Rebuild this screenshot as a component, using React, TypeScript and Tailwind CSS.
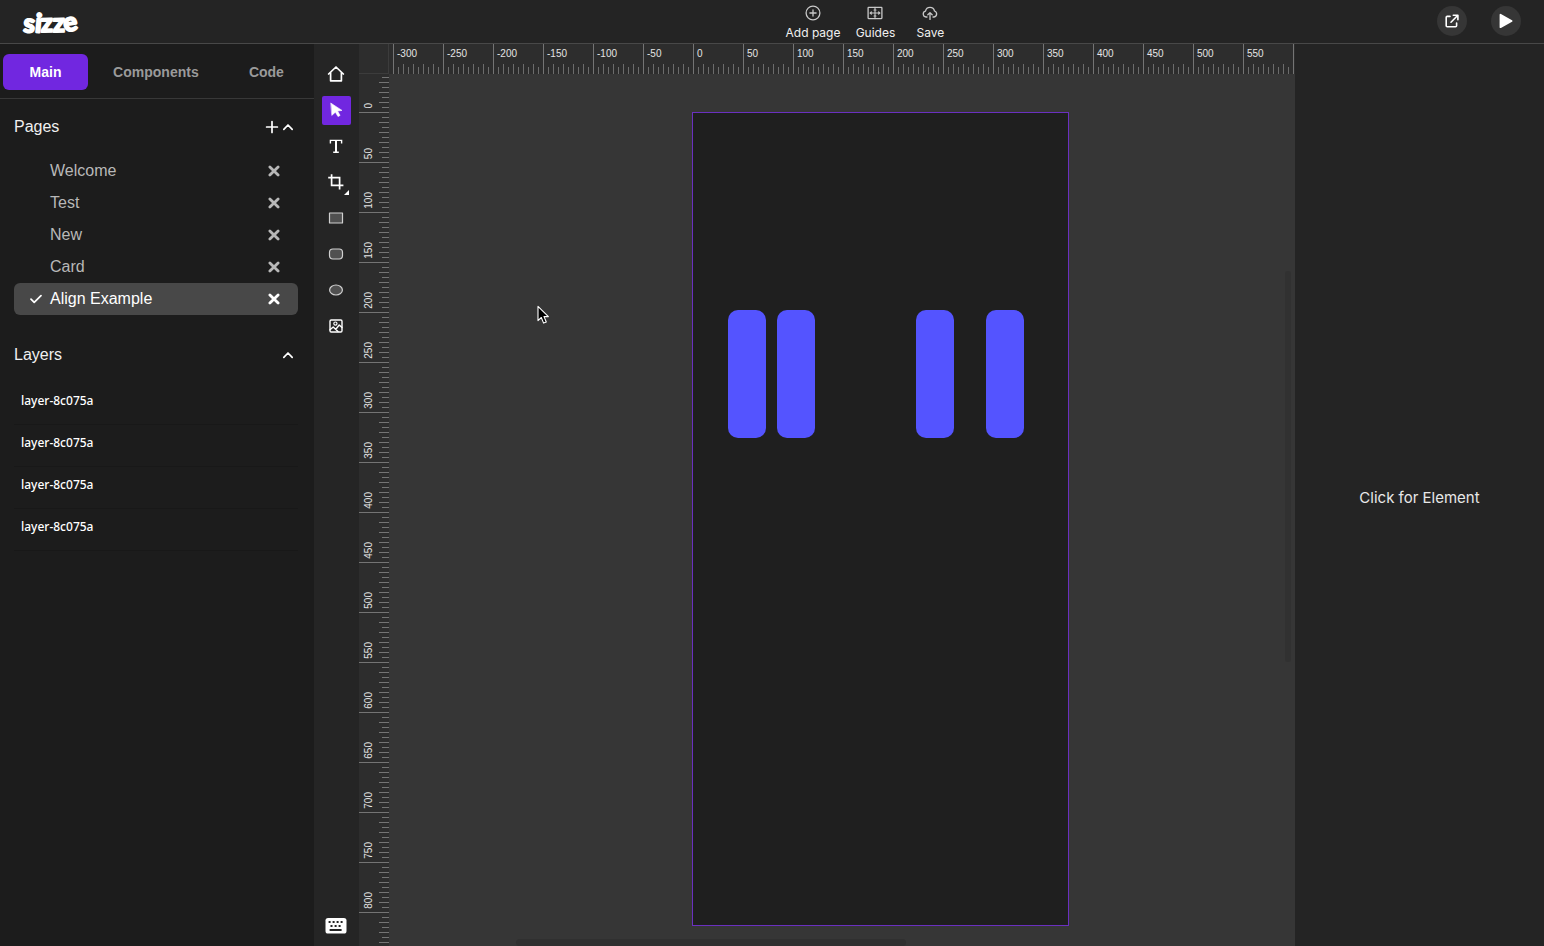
import { useState } from "react";
import type { ReactNode } from "react";

const PAGES = ["Welcome", "Test", "New", "Card", "Align Example"];
const LAYERS = ["layer-8c075a", "layer-8c075a", "layer-8c075a", "layer-8c075a"];
const TABS = ["Main", "Components", "Code"];
const TICKS = [1, 2, 3, 4, 5, 6, 7, 8, 9];

function range(from: number, to: number, step: number) {
  const out: number[] = [];
  for (let v = from; v <= to; v += step) out.push(v);
  return out;
}

function Logo() {
  return (
    <svg width="64" height="42" viewBox="0 0 64 42" role="img" aria-label="sizze" className="block">
      <text
        x="3"
        y="31"
        rotate="4 5 -1 -1 -10"
        fontFamily="Lato, sans-serif"
        fontWeight="700"
        fontSize="26"
        fill="#fff"
        stroke="#fff"
        strokeWidth="2"
        strokeLinejoin="round"
      >
        sizze
      </text>
    </svg>
  );
}

function HeaderAction({ label, children }: { label: string; children: ReactNode }) {
  return (
    <button type="button" className="flex min-w-10 flex-col items-center gap-1 text-xs leading-4 text-[#f0f0f0]">
      <svg width="16" height="16" viewBox="0 0 16 16" fill="none" stroke="#c8c8c8" strokeWidth="1.3" strokeLinecap="round" strokeLinejoin="round" aria-hidden="true">
        {children}
      </svg>
      {label}
    </button>
  );
}

function Header() {
  return (
    <header className="grid h-11 shrink-0 grid-cols-[1fr_auto_1fr] items-center border-b border-[#484848] bg-[#242424]">
      <a href="#home" className="justify-self-start pl-5">
        <Logo />
      </a>
      <nav className="flex gap-[15px] pl-[192px] pt-[3px] font-[Inter,sans-serif]">
        <HeaderAction label="Add page">
          <circle cx="8" cy="8" r="6.9" />
          <path d="M8 4.9v6.2M4.9 8h6.2" />
        </HeaderAction>
        <HeaderAction label="Guides">
          <rect x="1.1" y="2.4" width="13.8" height="11.2" rx="0.5" />
          <path d="M8 2.4v11.2M3 8h10M7 5h2M7 11h2M4.4 6.8 3.2 8l1.2 1.2M11.6 6.8 12.8 8l-1.2 1.2" strokeWidth="1.1" />
        </HeaderAction>
        <HeaderAction label="Save">
          <path d="M5 12H4a3 3 0 0 1-.5-5.9 4.6 4.6 0 0 1 9-.1A3.1 3.1 0 0 1 12.1 12H11M8 14.4V7.8M5.8 9.8 8 7.6l2.2 2.2" />
        </HeaderAction>
      </nav>
      <div className="flex gap-6 justify-self-end pr-[23px]">
        <button type="button" aria-label="Open in new tab" className="mb-0.5 flex size-[30px] items-center justify-center rounded-full bg-[#363636]">
          <svg width="14" height="14" viewBox="0 0 14 14" fill="none" stroke="#fff" strokeWidth="1.6" strokeLinecap="round" strokeLinejoin="round" aria-hidden="true">
            <path d="M5 2.4H2.2a1 1 0 0 0-1 1v8.4a1 1 0 0 0 1 1h8.4a1 1 0 0 0 1-1V9M6 8.2l6.6-6.7M8.3 1.2h4.6v4.5" />
          </svg>
        </button>
        <button type="button" aria-label="Play" className="mb-0.5 flex size-[30px] items-center justify-center rounded-full bg-[#363636]">
          <svg width="14" height="16" viewBox="0 0 14 16" aria-hidden="true">
            <path d="M1.5 1.8v12.4L12.6 8Z" fill="#fff" stroke="#fff" strokeWidth="1.8" strokeLinejoin="round" />
          </svg>
        </button>
      </div>
    </header>
  );
}

function ChevronUp() {
  return (
    <svg width="12" height="12" viewBox="0 0 12 12" fill="none" stroke="#fff" strokeWidth="1.7" strokeLinecap="round" strokeLinejoin="round" aria-hidden="true">
      <path d="M1.8 8.3 6 4l4.2 4.3" />
    </svg>
  );
}

function Sidebar({ page, onPage }: { page: string; onPage: (p: string) => void }) {
  return (
    <aside className="flex w-[314px] shrink-0 flex-col bg-[#1c1c1c] text-[#f0f0f0]">
      <div role="tablist" className="flex h-[55px] items-center border-b border-[#383838] pl-[3px] pr-[5px] pt-0.5">
        {TABS.map((t, i) => (
          <button
            key={t}
            type="button"
            role="tab"
            aria-selected={i === 0}
            className={
              i === 0
                ? "h-9 w-[85px] rounded-md bg-[#7127e0] text-sm font-bold text-white"
                : "h-9 grow rounded-md text-sm font-bold text-[#9a9a9a]"
            }
          >
            {t}
          </button>
        ))}
      </div>

      <section className="px-[14px] pr-4 pt-4">
        <div className="flex h-6 items-center justify-between">
          <h2 className="text-base">Pages</h2>
          <div className="flex items-center gap-[3px] pr-1">
            <button type="button" aria-label="Add page">
              <svg width="14" height="14" viewBox="0 0 14 14" stroke="#fff" strokeWidth="1.7" strokeLinecap="round" aria-hidden="true">
                <path d="M7 1.6v10.8M1.6 7h10.8" />
              </svg>
            </button>
            <button type="button" aria-label="Collapse pages">
              <ChevronUp />
            </button>
          </div>
        </div>
        <ul className="mt-4">
          {PAGES.map((p) => {
            const on = p === page;
            return (
              <li
                key={p}
                className={
                  on
                    ? "flex h-8 items-center rounded-md bg-[#484848] pr-[18px] text-white"
                    : "flex h-8 items-center rounded-md pr-[18px] text-[#b8b8b8]"
                }
              >
                <button type="button" onClick={() => onPage(p)} className="flex grow items-center gap-2 pl-4 text-left text-base">
                  <svg width="12" height="12" viewBox="0 0 12 12" fill="none" stroke={on ? "#fff" : "none"} strokeWidth="1.7" strokeLinecap="round" strokeLinejoin="round" aria-hidden="true">
                    <path d="M1 6.2 4.2 9.4 11 2.6" />
                  </svg>
                  {p}
                </button>
                <button type="button" aria-label={`Delete ${p}`}>
                  <svg width="12" height="12" viewBox="0 0 12 12" stroke="currentColor" strokeWidth="2.8" strokeLinecap="round" aria-hidden="true">
                    <path d="m1.9 1.9 8.2 8.2M10.1 1.9l-8.2 8.2" />
                  </svg>
                </button>
              </li>
            );
          })}
        </ul>
      </section>

      <section className="px-[14px] pr-4 pt-7">
        <div className="flex h-6 items-center justify-between">
          <h2 className="text-base">Layers</h2>
          <button type="button" aria-label="Collapse layers" className="pr-1">
            <ChevronUp />
          </button>
        </div>
        <ul className="mt-4">
          {LAYERS.map((l, i) => (
            <li key={i} className="border-b border-[#181818]">
              <button type="button" className="h-[41px] w-full px-[7px] pb-1.5 text-left font-['Noto_Sans',sans-serif] text-xs font-medium text-white">
                {l}
              </button>
            </li>
          ))}
        </ul>
      </section>
    </aside>
  );
}

const TOOLS: { name: string; icon: ReactNode }[] = [
  { name: "Home", icon: <path d="M1.6 9 9 2l7.4 7M3.6 7.6v8.2h10.8V7.6" strokeWidth="1.7" /> },
  {
    name: "Select",
    icon: <path d="M4 2.2 15 9.4l-4.4.7 2.5 4.3-2.1 1.2-2.6-4.4L5 14.2Z" fill="#fff" stroke="#fff" strokeWidth="0.6" />,
  },
  {
    name: "Text",
    icon: (
      <>
        <path d="M3.4 6.4V3.4h11.2v3M6.2 15.2h5.6" strokeWidth="1.4" strokeLinecap="butt" strokeLinejoin="miter" />
        <path d="M9 3.4v11.8" strokeWidth="2" strokeLinecap="butt" />
      </>
    ),
  },
  { name: "Crop", icon: <path d="M4.6 1.2v11.2h11.8M1.2 4.6h11.4v11.8" strokeWidth="1.7" strokeLinecap="butt" strokeLinejoin="miter" /> },
  { name: "Rectangle", icon: <rect x="2.5" y="4" width="13" height="10" fill="#505050" stroke="#d0d0d0" strokeWidth="1.2" /> },
  { name: "Rounded rectangle", icon: <rect x="2.5" y="4" width="13" height="10" rx="3.4" fill="#505050" stroke="#d0d0d0" strokeWidth="1.2" /> },
  { name: "Ellipse", icon: <ellipse cx="9" cy="9" rx="6.4" ry="5" fill="#505050" stroke="#d0d0d0" strokeWidth="1.2" /> },
  {
    name: "Image",
    icon: (
      <>
        <rect x="3" y="3" width="12" height="12" rx="1.2" strokeWidth="1.4" />
        <circle cx="8.4" cy="6.6" r="1.6" strokeWidth="1.2" />
        <path d="M3 12.8 6.2 10l4.8 4.6M8.8 12.2 12.2 8l2.8 2.6" strokeWidth="1.4" />
      </>
    ),
  },
];

function Toolbar() {
  const [tool, setTool] = useState("Select");
  return (
    <div role="toolbar" aria-label="Tools" className="flex w-[45px] shrink-0 flex-col items-center bg-[#252525] pb-[11px] pt-4">
      <div className="flex flex-col gap-[7px]">
        {TOOLS.map(({ name, icon }) => (
          <button
            key={name}
            type="button"
            aria-label={name}
            onClick={() => setTool(name)}
            className={
              tool === name
                ? "relative flex size-[29px] items-center justify-center rounded-xs bg-[#7127e0] pb-px pr-px"
                : "relative flex size-[29px] items-center justify-center pb-px pr-px"
            }
          >
            <svg width="18" height="18" viewBox="0 0 18 18" fill="none" stroke="#fff" strokeLinecap="round" strokeLinejoin="round" aria-hidden="true">
              {icon}
            </svg>
            {name === "Crop" && (
              <svg width="5" height="5" viewBox="0 0 5 5" className="absolute bottom-0.5 right-0.5" aria-hidden="true">
                <path d="M5 0v5H0Z" fill="#fff" />
              </svg>
            )}
          </button>
        ))}
      </div>
      <button type="button" aria-label="Keyboard shortcuts" className="mt-auto pr-0.5">
        <svg width="22" height="18" viewBox="0 0 22 18" aria-hidden="true">
          <rect x="0.5" y="1" width="21" height="15.5" rx="2.6" fill="#fff" />
          <path d="M3.6 5.1h2M7.6 5.1h2M11.6 5.1h2M15.6 5.1h2M5.5 9.1h2M9.6 9.1h2M13.6 9.1h2M4.6 13.1h12" stroke="#252525" strokeWidth="2" />
        </svg>
      </button>
    </div>
  );
}

function TopRuler() {
  return (
    <div className="flex h-[30px] min-w-0 grow overflow-hidden bg-[#2d2d2d] pl-[4px]">
      {range(-300, 550, 50).map((v) => (
        <div key={v} className="flex h-full w-[50px] shrink-0 flex-col justify-between border-l border-[#747474]">
          <span className="pl-[3px] pt-[3px] text-[10px] leading-[14px] text-[#e4e4e4]">{v}</span>
          <div className="flex items-end gap-1 pl-1">
            {TICKS.map((t) => (
              <i key={t} className={t % 2 ? "h-[7px] w-px bg-[#6c6c6c]" : "h-[10px] w-px bg-[#6c6c6c]"} />
            ))}
          </div>
        </div>
      ))}
      <div className="h-full border-l border-[#747474]" />
    </div>
  );
}

function LeftRuler() {
  return (
    <div className="flex w-[30px] shrink-0 flex-col overflow-hidden bg-[#2d2d2d]">
      {range(0, 850, 50).map((v) => (
        <div
          key={v}
          className={
            v === 0
              ? "flex h-[39px] shrink-0 items-end justify-between overflow-hidden border-b border-[#747474]"
              : "flex h-[50px] shrink-0 items-end justify-between overflow-hidden border-b border-[#747474]"
          }
        >
          <span className="rotate-180 pr-[3px] pt-[3px] text-[10px] leading-[14px] text-[#e4e4e4] [writing-mode:vertical-rl]">
            {v <= 800 && v}
          </span>
          <div className="flex flex-col items-end gap-1 pb-1">
            {TICKS.map((t) => (
              <i key={t} className={t % 2 ? "h-px w-[7px] bg-[#747474]" : "h-px w-[10px] bg-[#747474]"} />
            ))}
          </div>
        </div>
      ))}
    </div>
  );
}

function Canvas() {
  return (
    <div className="relative min-w-0 grow overflow-hidden bg-[#363636]">
      <div className="absolute left-[303px] top-[38px] h-[814px] w-[377px] border border-[#6a30c0] bg-[#1f1f1f]">
        <div className="absolute left-[35px] top-[197px] h-[128px] w-[38px] rounded-[10px] bg-[#5454ff]" />
        <div className="absolute left-[84px] top-[197px] h-[128px] w-[38px] rounded-[10px] bg-[#5454ff]" />
        <div className="absolute left-[223px] top-[197px] h-[128px] w-[38px] rounded-[10px] bg-[#5454ff]" />
        <div className="absolute left-[293px] top-[197px] h-[128px] w-[38px] rounded-[10px] bg-[#5454ff]" />
      </div>
      <svg width="13" height="20" viewBox="0 0 13 20" className="absolute left-[148px] top-[231px]" aria-hidden="true">
        <path d="M1 1.4v14.2l3.3-3.1 2.3 5.6 2.7-1.1-2.3-5.4h4.4Z" fill="#000" stroke="#fff" strokeWidth="1.1" strokeLinejoin="round" />
      </svg>
      <div className="absolute right-1 top-[197px] h-[391px] w-1.5 rounded-full bg-[#313131]" />
      <div className="absolute bottom-0 left-[127px] h-[7px] w-[390px] rounded-full bg-[#303030]" />
    </div>
  );
}

export default function App() {
  const [page, setPage] = useState("Align Example");
  return (
    <div className="flex h-screen flex-col overflow-hidden bg-[#242424] font-['Liberation_Sans',Arial,sans-serif]">
      <Header />
      <div className="flex min-h-0 grow">
        <Sidebar page={page} onPage={setPage} />
        <Toolbar />
        <main className="flex min-w-0 grow flex-col">
          <div className="flex shrink-0">
            <div className="size-[30px] shrink-0 border-b border-r border-[#3c3c3c] bg-[#2d2d2d]" />
            <TopRuler />
          </div>
          <div className="flex min-h-0 grow">
            <LeftRuler />
            <Canvas />
          </div>
        </main>
        <aside className="flex w-[249px] shrink-0 items-center justify-center bg-[#242424] pt-1.5 font-[Inter,sans-serif] text-[15px] text-[#e8e8e8]">
          Click for Element
        </aside>
      </div>
    </div>
  );
}
